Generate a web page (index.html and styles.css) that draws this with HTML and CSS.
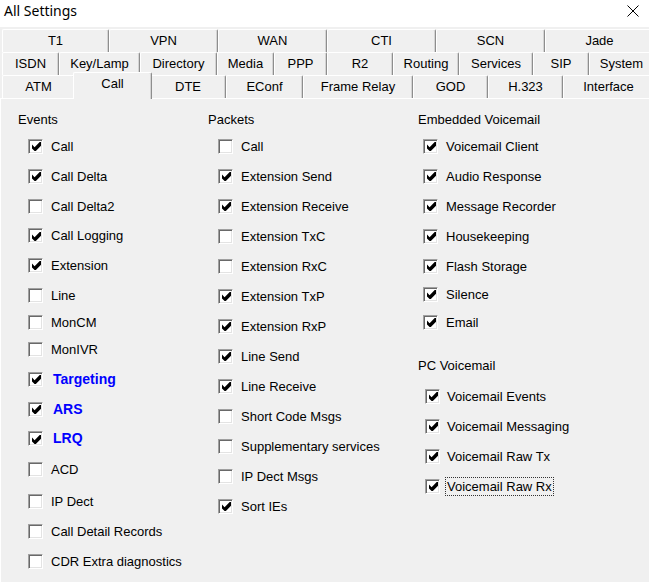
FILE: index.html
```html
<!DOCTYPE html>
<html>
<head>
<meta charset="utf-8">
<title>All Settings</title>
<link rel="stylesheet" href="styles.css">
</head>
<body>
<div class="titlebar">
  <span class="title">All Settings</span>
  <svg class="close" viewBox="0 0 12 12" width="12" height="12"><path d="M0.5 0.5 L11.5 11.5 M11.5 0.5 L0.5 11.5" stroke="#000" stroke-width="1" fill="none"/></svg>
</div>
<div class="tabs">
  <div class="tabrow row1">
    <div class="tab">T1</div><div class="tab">VPN</div><div class="tab">WAN</div><div class="tab">CTI</div><div class="tab">SCN</div><div class="tab">Jade</div>
  </div>
  <div class="tabrow row2">
    <div class="tab">ISDN</div><div class="tab">Key/Lamp</div><div class="tab">Directory</div><div class="tab">Media</div><div class="tab">PPP</div><div class="tab">R2</div><div class="tab">Routing</div><div class="tab">Services</div><div class="tab">SIP</div><div class="tab">System</div>
  </div>
  <div class="tabrow row3">
    <div class="tab">ATM</div><div class="tab selected">Call</div><div class="tab">DTE</div><div class="tab">EConf</div><div class="tab">Frame Relay</div><div class="tab">GOD</div><div class="tab">H.323</div><div class="tab">Interface</div>
  </div>
</div>
<div class="panel">
  <div class="col col-events">
    <div class="group-title">Events</div>
    <div class="item"><span class="cb on"><svg viewBox="0 0 7 7"><polygon points="0,2 2,4 6,0 7,0 7,3 3,7 2,7 0,5"/></svg></span><span class="lbl">Call</span></div>
    <div class="item"><span class="cb on"><svg viewBox="0 0 7 7"><polygon points="0,2 2,4 6,0 7,0 7,3 3,7 2,7 0,5"/></svg></span><span class="lbl">Call Delta</span></div>
    <div class="item"><span class="cb"></span><span class="lbl">Call Delta2</span></div>
    <div class="item h29"><span class="cb on"><svg viewBox="0 0 7 7"><polygon points="0,2 2,4 6,0 7,0 7,3 3,7 2,7 0,5"/></svg></span><span class="lbl">Call Logging</span></div>
    <div class="item"><span class="cb on"><svg viewBox="0 0 7 7"><polygon points="0,2 2,4 6,0 7,0 7,3 3,7 2,7 0,5"/></svg></span><span class="lbl">Extension</span></div>
    <div class="item"><span class="cb"></span><span class="lbl">Line</span></div>
    <div class="item h25"><span class="cb"></span><span class="lbl">MonCM</span></div>
    <div class="item h29"><span class="cb"></span><span class="lbl">MonIVR</span></div>
    <div class="item"><span class="cb on"><svg viewBox="0 0 7 7"><polygon points="0,2 2,4 6,0 7,0 7,3 3,7 2,7 0,5"/></svg></span><span class="lbl strong">Targeting</span></div>
    <div class="item"><span class="cb on"><svg viewBox="0 0 7 7"><polygon points="0,2 2,4 6,0 7,0 7,3 3,7 2,7 0,5"/></svg></span><span class="lbl strong">ARS</span></div>
    <div class="item h29"><span class="cb on"><svg viewBox="0 0 7 7"><polygon points="0,2 2,4 6,0 7,0 7,3 3,7 2,7 0,5"/></svg></span><span class="lbl strong">LRQ</span></div>
    <div class="item h33"><span class="cb"></span><span class="lbl">ACD</span></div>
    <div class="item"><span class="cb"></span><span class="lbl">IP Dect</span></div>
    <div class="item"><span class="cb"></span><span class="lbl">Call Detail Records</span></div>
    <div class="item"><span class="cb"></span><span class="lbl">CDR Extra diagnostics</span></div>
  </div>
  <div class="col col-packets">
    <div class="group-title">Packets</div>
    <div class="item"><span class="cb"></span><span class="lbl">Call</span></div>
    <div class="item"><span class="cb on"><svg viewBox="0 0 7 7"><polygon points="0,2 2,4 6,0 7,0 7,3 3,7 2,7 0,5"/></svg></span><span class="lbl">Extension Send</span></div>
    <div class="item"><span class="cb on"><svg viewBox="0 0 7 7"><polygon points="0,2 2,4 6,0 7,0 7,3 3,7 2,7 0,5"/></svg></span><span class="lbl">Extension Receive</span></div>
    <div class="item"><span class="cb"></span><span class="lbl">Extension TxC</span></div>
    <div class="item"><span class="cb"></span><span class="lbl">Extension RxC</span></div>
    <div class="item"><span class="cb on"><svg viewBox="0 0 7 7"><polygon points="0,2 2,4 6,0 7,0 7,3 3,7 2,7 0,5"/></svg></span><span class="lbl">Extension TxP</span></div>
    <div class="item"><span class="cb on"><svg viewBox="0 0 7 7"><polygon points="0,2 2,4 6,0 7,0 7,3 3,7 2,7 0,5"/></svg></span><span class="lbl">Extension RxP</span></div>
    <div class="item"><span class="cb on"><svg viewBox="0 0 7 7"><polygon points="0,2 2,4 6,0 7,0 7,3 3,7 2,7 0,5"/></svg></span><span class="lbl">Line Send</span></div>
    <div class="item"><span class="cb on"><svg viewBox="0 0 7 7"><polygon points="0,2 2,4 6,0 7,0 7,3 3,7 2,7 0,5"/></svg></span><span class="lbl">Line Receive</span></div>
    <div class="item"><span class="cb"></span><span class="lbl">Short Code Msgs</span></div>
    <div class="item"><span class="cb"></span><span class="lbl">Supplementary services</span></div>
    <div class="item"><span class="cb"></span><span class="lbl">IP Dect Msgs</span></div>
    <div class="item"><span class="cb on"><svg viewBox="0 0 7 7"><polygon points="0,2 2,4 6,0 7,0 7,3 3,7 2,7 0,5"/></svg></span><span class="lbl">Sort IEs</span></div>
  </div>
  <div class="col col-voicemail">
    <div class="group-title">Embedded Voicemail</div>
    <div class="item"><span class="cb on"><svg viewBox="0 0 7 7"><polygon points="0,2 2,4 6,0 7,0 7,3 3,7 2,7 0,5"/></svg></span><span class="lbl">Voicemail Client</span></div>
    <div class="item"><span class="cb on"><svg viewBox="0 0 7 7"><polygon points="0,2 2,4 6,0 7,0 7,3 3,7 2,7 0,5"/></svg></span><span class="lbl">Audio Response</span></div>
    <div class="item"><span class="cb on"><svg viewBox="0 0 7 7"><polygon points="0,2 2,4 6,0 7,0 7,3 3,7 2,7 0,5"/></svg></span><span class="lbl">Message Recorder</span></div>
    <div class="item"><span class="cb on"><svg viewBox="0 0 7 7"><polygon points="0,2 2,4 6,0 7,0 7,3 3,7 2,7 0,5"/></svg></span><span class="lbl">Housekeeping</span></div>
    <div class="item"><span class="cb on"><svg viewBox="0 0 7 7"><polygon points="0,2 2,4 6,0 7,0 7,3 3,7 2,7 0,5"/></svg></span><span class="lbl">Flash Storage</span></div>
    <div class="item h26"><span class="cb on"><svg viewBox="0 0 7 7"><polygon points="0,2 2,4 6,0 7,0 7,3 3,7 2,7 0,5"/></svg></span><span class="lbl">Silence</span></div>
    <div class="item"><span class="cb on"><svg viewBox="0 0 7 7"><polygon points="0,2 2,4 6,0 7,0 7,3 3,7 2,7 0,5"/></svg></span><span class="lbl">Email</span></div>
    <div class="group-title sub-title">PC Voicemail</div>
    <div class="item sub"><span class="cb on"><svg viewBox="0 0 7 7"><polygon points="0,2 2,4 6,0 7,0 7,3 3,7 2,7 0,5"/></svg></span><span class="lbl">Voicemail Events</span></div>
    <div class="item sub"><span class="cb on"><svg viewBox="0 0 7 7"><polygon points="0,2 2,4 6,0 7,0 7,3 3,7 2,7 0,5"/></svg></span><span class="lbl">Voicemail Messaging</span></div>
    <div class="item sub"><span class="cb on"><svg viewBox="0 0 7 7"><polygon points="0,2 2,4 6,0 7,0 7,3 3,7 2,7 0,5"/></svg></span><span class="lbl">Voicemail Raw Tx</span></div>
    <div class="item sub"><span class="cb on"><svg viewBox="0 0 7 7"><polygon points="0,2 2,4 6,0 7,0 7,3 3,7 2,7 0,5"/></svg></span><span class="lbl focus">Voicemail Raw Rx</span></div>
  </div>
</div>
</body>
</html>
```
FILE: styles.css
```css
* { box-sizing: border-box; }
html, body { margin: 0; padding: 0; }
body {
  width: 649px;
  height: 582px;
  overflow: hidden;
  background: #f0f0f0;
  font-family: "Liberation Sans", Arial, sans-serif;
  font-size: 13px;
  color: #000;
}

.titlebar {
  height: 27px;
  background: #fff;
  display: flex;
  justify-content: space-between;
  align-items: flex-start;
  padding: 0 10px 0 4px;
}
.title {
  font-family: "Noto Sans", "Open Sans", sans-serif;
  font-size: 14px;
  line-height: 22px;
}
.close { margin-top: 5px; display: block; }

.tabs { padding: 2px 0 0 2px; }
.tabrow { display: grid; height: 23px; }
.row1 { grid-template-columns: 107px repeat(5, 109px); }
.row2 { grid-template-columns: 57px 81px 77px 57px 53px 66px 66px 74px 56px 65px; }
.row3 { grid-template-columns: 73px 75px 76px 77px 110px 75px 75px 91px; }

.tab {
  height: 23px;
  border-top: 1px solid #fff;
  border-left: 1px solid #fff;
  border-right: 1px solid #8e8e8e;
  border-top-left-radius: 2px;
  border-top-right-radius: 2px;
  box-shadow: inset -1px 0 0 #d4d4d4;
  background: #f0f0f0;
  text-align: center;
  line-height: 21px;
  white-space: nowrap;
  overflow: hidden;
}
.tab.selected {
  height: 27px;
  margin: -3px -2px -1px -2px;
  line-height: 22px;
  position: relative;
  z-index: 1;
}

.panel {
  border-top: 1px solid #fff;
  border-left: 1px solid #fff;
  display: grid;
  grid-template-columns: 190px 210px 1fr;
  padding: 9px 0 0 17px;
  height: 484px;
}

.group-title {
  height: 23px;
  line-height: 23px;
  white-space: nowrap;
}
.sub-title {
  margin-top: 14px;
  height: 30px;
  line-height: 30px;
}

.item {
  display: flex;
  align-items: center;
  height: 30px;
  padding-left: 10px;
  white-space: nowrap;
}
.item.h25 { height: 25px; }
.item.h26 { height: 26px; }
.item.h29 { height: 29px; }
.item.h33 { height: 33px; }

.col-voicemail .item { padding-left: 5px; }
.col-voicemail .item.sub { padding-left: 7px; }

.cb {
  flex: none;
  width: 15px;
  height: 15px;
  margin-right: 8px;
  background: #fff;
  border: 1px solid;
  border-color: #a0a0a0 #fff #fff #a0a0a0;
  box-shadow: inset 1px 1px 0 #696969, inset -1px -1px 0 #e3e3e3;
  display: flex;
  align-items: center;
  justify-content: center;
}
.cb svg {
  width: 9px;
  height: 9px;
  fill: #000;
  margin: 1px 0 0 1px;
}
.item.sub .cb { margin-right: 7px; }

.lbl { line-height: 15px; }
.lbl.strong {
  font-weight: bold;
  font-size: 14px;
  color: #0000ff;
  padding-left: 2px;
}
.lbl.focus {
  border: 1px dotted #333;
  padding: 1px 1px;
  margin-left: -2px;
}
```
